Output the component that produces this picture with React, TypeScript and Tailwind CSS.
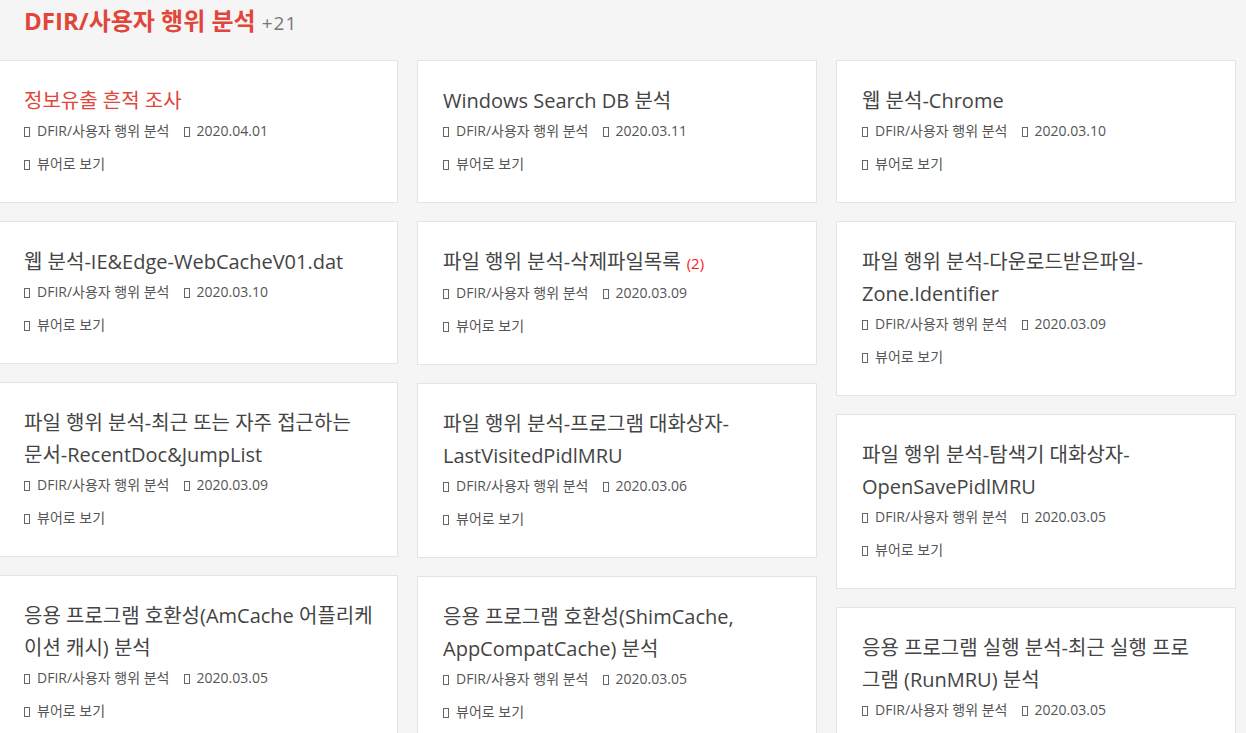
import React from "react";

interface IPost {
  title: string;
  date: string;
  comments?: number;
  active?: boolean;
}

// titles keep the line breaks the blog layout shows
const columns: IPost[][] = [
  [
    { title: "정보유출 흔적 조사", date: "2020.04.01", active: true },
    { title: "웹 분석-IE&Edge-WebCacheV01.dat", date: "2020.03.10" },
    { title: "파일 행위 분석-최근 또는 자주 접근하는\n문서-RecentDoc&JumpList", date: "2020.03.09" },
    { title: "응용 프로그램 호환성(AmCache 어플리케\n이션 캐시) 분석", date: "2020.03.05" },
  ],
  [
    { title: "Windows Search DB 분석", date: "2020.03.11" },
    { title: "파일 행위 분석-삭제파일목록", date: "2020.03.09", comments: 2 },
    { title: "파일 행위 분석-프로그램 대화상자-\nLastVisitedPidlMRU", date: "2020.03.06" },
    { title: "응용 프로그램 호환성(ShimCache,\nAppCompatCache) 분석", date: "2020.03.05" },
  ],
  [
    { title: "웹 분석-Chrome", date: "2020.03.10" },
    { title: "파일 행위 분석-다운로드받은파일-\nZone.Identifier", date: "2020.03.09" },
    { title: "파일 행위 분석-탐색기 대화상자-\nOpenSavePidlMRU", date: "2020.03.05" },
    { title: "응용 프로그램 실행 분석-최근 실행 프로\n그램 (RunMRU) 분석", date: "2020.03.05" },
  ],
];

// icon font glyph that did not load, shown as an empty box
const Tofu: React.FC = () => (
  <span className="mr-[7px] inline-block h-[10px] w-[6px] translate-y-[1px] border border-[#666]" />
);

const PostCard: React.FC<{ post: IPost }> = ({ post }) => {
  return (
    <div className="border border-[#e4e4e4] bg-white pb-[27px] pl-[25px] pr-[20px] pt-[24px]">
      <h3
        className={`whitespace-pre-line text-[20px] leading-[32px] ${
          post.active ? "text-[#e2463a]" : "text-[#444]"
        }`}
      >
        {post.title}
        {post.comments ? (
          <span className="ml-[6px] text-[15px] text-[#ff1a1a]">({post.comments})</span>
        ) : null}
      </h3>
      <div className="mt-[3px] flex items-center text-[14px] leading-[22px] text-[#555]">
        <span className="flex items-center">
          <Tofu />
          DFIR/사용자 행위 분석
        </span>
        <span className="ml-[14px] flex items-center">
          <Tofu />
          {post.date}
        </span>
      </div>
      <div className="mt-[11px] flex items-center text-[14px] leading-[22px] text-[#555]">
        <Tofu />
        뷰어로 보기
      </div>
    </div>
  );
};

const App: React.FC = () => {
  return (
    <div
      className="h-[733px] overflow-hidden bg-[#f5f5f5]"
      style={{ fontFamily: '"Open Sans", "Noto Sans CJK KR", sans-serif' }}
    >
      <div className="flex items-baseline px-[24px] pt-[5px]">
        <h2 className="text-[24px] font-bold leading-[32px] text-[#e2463a]">
          DFIR/사용자 행위 분석
        </h2>
        <span className="ml-[6px] text-[19px] tracking-[1px] text-[#777]">+21</span>
      </div>
      <div className="ml-[-2px] mt-[22px] flex items-start gap-[19px]">
        {columns.map((col, i) => (
          <div key={i} className="flex w-[400px] flex-col gap-[18px]">
            {col.map((post) => (
              <PostCard key={post.title} post={post} />
            ))}
          </div>
        ))}
      </div>
    </div>
  );
};

export default App;
